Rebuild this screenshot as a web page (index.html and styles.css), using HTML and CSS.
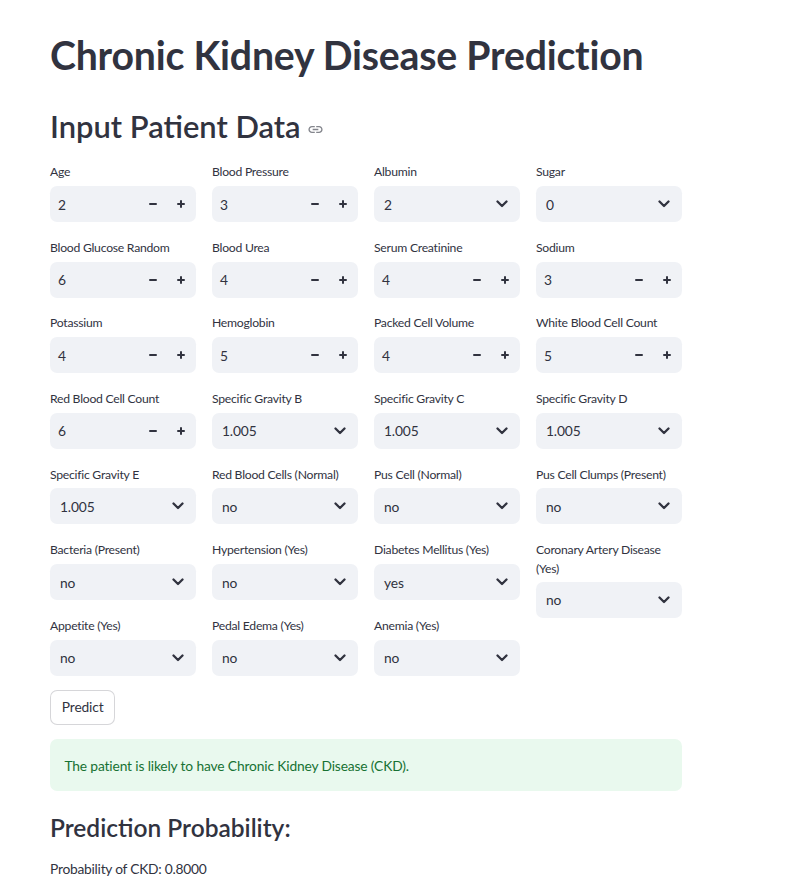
FILE: index.html
```html
<!DOCTYPE html>
<html lang="en">
<head>
<meta charset="utf-8">
<title>Chronic Kidney Disease Prediction</title>
<link rel="stylesheet" href="styles.css">
</head>
<body>
<main class="main">
  <h1 class="title">Chronic Kidney Disease Prediction</h1>
  <h2 class="subtitle">Input Patient Data
    <svg class="link-icon" viewBox="0 0 24 24" width="17" height="17" aria-hidden="true"><path d="M3.9 12c0-1.71 1.39-3.1 3.1-3.1h4V7H7c-2.76 0-5 2.24-5 5s2.24 5 5 5h4v-1.9H7c-1.71 0-3.1-1.39-3.1-3.1zM8 13h8v-2H8v2zm9-6h-4v1.9h4c1.71 0 3.1 1.39 3.1 3.1s-1.39 3.1-3.1 3.1h-4V17h4c2.76 0 5-2.24 5-5s-2.240-5-5-5z"/></svg>
  </h2>

  <div class="columns">
    <div class="col">
      <div class="field"><label class="label">Age</label><div class="num"><span class="val">2</span><span class="btn minus"></span><span class="btn plus"></span></div></div>
      <div class="field"><label class="label">Blood Glucose Random</label><div class="num"><span class="val">6</span><span class="btn minus"></span><span class="btn plus"></span></div></div>
      <div class="field"><label class="label">Potassium</label><div class="num"><span class="val">4</span><span class="btn minus"></span><span class="btn plus"></span></div></div>
      <div class="field"><label class="label">Red Blood Cell Count</label><div class="num"><span class="val">6</span><span class="btn minus"></span><span class="btn plus"></span></div></div>
      <div class="field"><label class="label">Specific Gravity E</label><div class="sel"><span class="sval">1.005</span><svg class="chev" viewBox="0 0 12 8" width="12" height="8"><polyline points="1.5,1.5 6,6 10.5,1.5"/></svg></div></div>
      <div class="field"><label class="label">Bacteria (Present)</label><div class="sel"><span class="sval">no</span><svg class="chev" viewBox="0 0 12 8" width="12" height="8"><polyline points="1.5,1.5 6,6 10.5,1.5"/></svg></div></div>
      <div class="field"><label class="label">Appetite (Yes)</label><div class="sel"><span class="sval">no</span><svg class="chev" viewBox="0 0 12 8" width="12" height="8"><polyline points="1.5,1.5 6,6 10.5,1.5"/></svg></div></div>
    </div>
    <div class="col">
      <div class="field"><label class="label">Blood Pressure</label><div class="num"><span class="val">3</span><span class="btn minus"></span><span class="btn plus"></span></div></div>
      <div class="field"><label class="label">Blood Urea</label><div class="num"><span class="val">4</span><span class="btn minus"></span><span class="btn plus"></span></div></div>
      <div class="field"><label class="label">Hemoglobin</label><div class="num"><span class="val">5</span><span class="btn minus"></span><span class="btn plus"></span></div></div>
      <div class="field"><label class="label">Specific Gravity B</label><div class="sel"><span class="sval">1.005</span><svg class="chev" viewBox="0 0 12 8" width="12" height="8"><polyline points="1.5,1.5 6,6 10.5,1.5"/></svg></div></div>
      <div class="field"><label class="label">Red Blood Cells (Normal)</label><div class="sel"><span class="sval">no</span><svg class="chev" viewBox="0 0 12 8" width="12" height="8"><polyline points="1.5,1.5 6,6 10.5,1.5"/></svg></div></div>
      <div class="field"><label class="label">Hypertension (Yes)</label><div class="sel"><span class="sval">no</span><svg class="chev" viewBox="0 0 12 8" width="12" height="8"><polyline points="1.5,1.5 6,6 10.5,1.5"/></svg></div></div>
      <div class="field"><label class="label">Pedal Edema (Yes)</label><div class="sel"><span class="sval">no</span><svg class="chev" viewBox="0 0 12 8" width="12" height="8"><polyline points="1.5,1.5 6,6 10.5,1.5"/></svg></div></div>
    </div>
    <div class="col">
      <div class="field"><label class="label">Albumin</label><div class="sel"><span class="sval">2</span><svg class="chev" viewBox="0 0 12 8" width="12" height="8"><polyline points="1.5,1.5 6,6 10.5,1.5"/></svg></div></div>
      <div class="field"><label class="label">Serum Creatinine</label><div class="num"><span class="val">4</span><span class="btn minus"></span><span class="btn plus"></span></div></div>
      <div class="field"><label class="label">Packed Cell Volume</label><div class="num"><span class="val">4</span><span class="btn minus"></span><span class="btn plus"></span></div></div>
      <div class="field"><label class="label">Specific Gravity C</label><div class="sel"><span class="sval">1.005</span><svg class="chev" viewBox="0 0 12 8" width="12" height="8"><polyline points="1.5,1.5 6,6 10.5,1.5"/></svg></div></div>
      <div class="field"><label class="label">Pus Cell (Normal)</label><div class="sel"><span class="sval">no</span><svg class="chev" viewBox="0 0 12 8" width="12" height="8"><polyline points="1.5,1.5 6,6 10.5,1.5"/></svg></div></div>
      <div class="field"><label class="label">Diabetes Mellitus (Yes)</label><div class="sel"><span class="sval">yes</span><svg class="chev" viewBox="0 0 12 8" width="12" height="8"><polyline points="1.5,1.5 6,6 10.5,1.5"/></svg></div></div>
      <div class="field"><label class="label">Anemia (Yes)</label><div class="sel"><span class="sval">no</span><svg class="chev" viewBox="0 0 12 8" width="12" height="8"><polyline points="1.5,1.5 6,6 10.5,1.5"/></svg></div></div>
    </div>
    <div class="col">
      <div class="field"><label class="label">Sugar</label><div class="sel"><span class="sval">0</span><svg class="chev" viewBox="0 0 12 8" width="12" height="8"><polyline points="1.5,1.5 6,6 10.5,1.5"/></svg></div></div>
      <div class="field"><label class="label">Sodium</label><div class="num"><span class="val">3</span><span class="btn minus"></span><span class="btn plus"></span></div></div>
      <div class="field"><label class="label">White Blood Cell Count</label><div class="num"><span class="val">5</span><span class="btn minus"></span><span class="btn plus"></span></div></div>
      <div class="field"><label class="label">Specific Gravity D</label><div class="sel"><span class="sval">1.005</span><svg class="chev" viewBox="0 0 12 8" width="12" height="8"><polyline points="1.5,1.5 6,6 10.5,1.5"/></svg></div></div>
      <div class="field"><label class="label">Pus Cell Clumps (Present)</label><div class="sel"><span class="sval">no</span><svg class="chev" viewBox="0 0 12 8" width="12" height="8"><polyline points="1.5,1.5 6,6 10.5,1.5"/></svg></div></div>
      <div class="field"><label class="label">Coronary Artery Disease (Yes)</label><div class="sel"><span class="sval">no</span><svg class="chev" viewBox="0 0 12 8" width="12" height="8"><polyline points="1.5,1.5 6,6 10.5,1.5"/></svg></div></div>
    </div>
  </div>

  <div class="btn-row"><button class="predict">Predict</button></div>

  <div class="alert">The patient is likely to have Chronic Kidney Disease (CKD).</div>

  <h3 class="section">Prediction Probability:</h3>
  <p class="prob">Probability of CKD: 0.8000</p>
</main>
</body>
</html>
```

FILE: styles.css
```css
* { box-sizing: border-box; }

html, body {
  margin: 0;
  padding: 0;
  background: #ffffff;
}

body {
  font-family: Lato, "Open Sans", "Liberation Sans", sans-serif;
  color: #31333f;
  font-size: 13.8px;
  letter-spacing: -0.15px;
}

.main {
  width: 632px;
  margin-left: 50px;
  padding-top: 13.4px;
  display: flex;
  flex-direction: column;
  gap: 14.4px;
}

.title {
  margin: 0 0 -14.4px 0;
  padding: 18px 0 14.4px 0;
  font-size: 39.2px;
  line-height: 47.5px;
  font-weight: 700;
  letter-spacing: -0.2px;
  color: #31333f;
}

.subtitle {
  margin: 0 0 -14.4px 0;
  padding: 14.4px 0 14.4px 0;
  font-size: 30.9px;
  line-height: 38.9px;
  font-weight: 600;
  letter-spacing: 0;
  color: #31333f;
  display: flex;
  align-items: center;
  gap: 6px;
}

.link-icon {
  fill: rgba(49, 51, 63, 0.6);
  margin-top: 4px;
}

.columns {
  display: flex;
  gap: 16px;
  align-items: flex-start;
}

.col {
  width: 146px;
  display: flex;
  flex-direction: column;
  gap: 14.4px;
}

.field {
  display: flex;
  flex-direction: column;
}

.label {
  min-height: 21.6px;
  margin-bottom: 3.6px;
  font-size: 12.2px;
  letter-spacing: -0.25px;
  line-height: 19px;
  padding-top: 1.3px;
  color: #31333f;
}

.num, .sel {
  height: 36px;
  background: #f0f2f6;
  border-radius: 7.2px;
  display: flex;
  align-items: center;
}

.val {
  flex: 1;
  padding-left: 8px;
  font-size: 13.8px;
}

.btn {
  width: 28px;
  height: 36px;
  position: relative;
  flex: none;
}

.btn::before, .btn::after {
  content: "";
  position: absolute;
  background: #31333f;
  border-radius: 1px;
}

.minus::before {
  width: 8px;
  height: 2px;
  left: 10px;
  top: 17px;
}

.minus::after { display: none; }

.plus { margin-right: 1px; }

.plus::before {
  width: 8px;
  height: 2px;
  left: 10px;
  top: 17px;
}

.plus::after {
  width: 2px;
  height: 8px;
  left: 13px;
  top: 14px;
}

.sel {
  padding: 0 12px 0 10px;
  justify-content: space-between;
}

.sval {
  font-size: 13.8px;
}

.chev {
  fill: none;
  stroke: #31333f;
  stroke-width: 2.3;
  stroke-linecap: round;
  stroke-linejoin: round;
}

.btn-row {
  display: flex;
}

.predict {
  font-family: inherit;
  font-size: 13.8px;
  letter-spacing: -0.15px;
  color: #31333f;
  background: #ffffff;
  border: 1px solid rgba(49, 51, 63, 0.2);
  border-radius: 7.2px;
  height: 35px;
  padding: 0 10.8px;
  line-height: 1.6;
}

.alert {
  background: #e9f9ee;
  color: #177233;
  border-radius: 7.2px;
  padding: 14.4px;
  line-height: 23px;
  font-size: 13.8px;
}

.section {
  margin: 0 0 -14.4px 0;
  padding: 7.2px 0 14.4px 0;
  font-size: 24.5px;
  line-height: 30.2px;
  font-weight: 600;
  letter-spacing: 0;
  color: #31333f;
}

.prob {
  margin: 0;
  font-size: 13.8px;
  letter-spacing: -0.25px;
  line-height: 23px;
}
```
